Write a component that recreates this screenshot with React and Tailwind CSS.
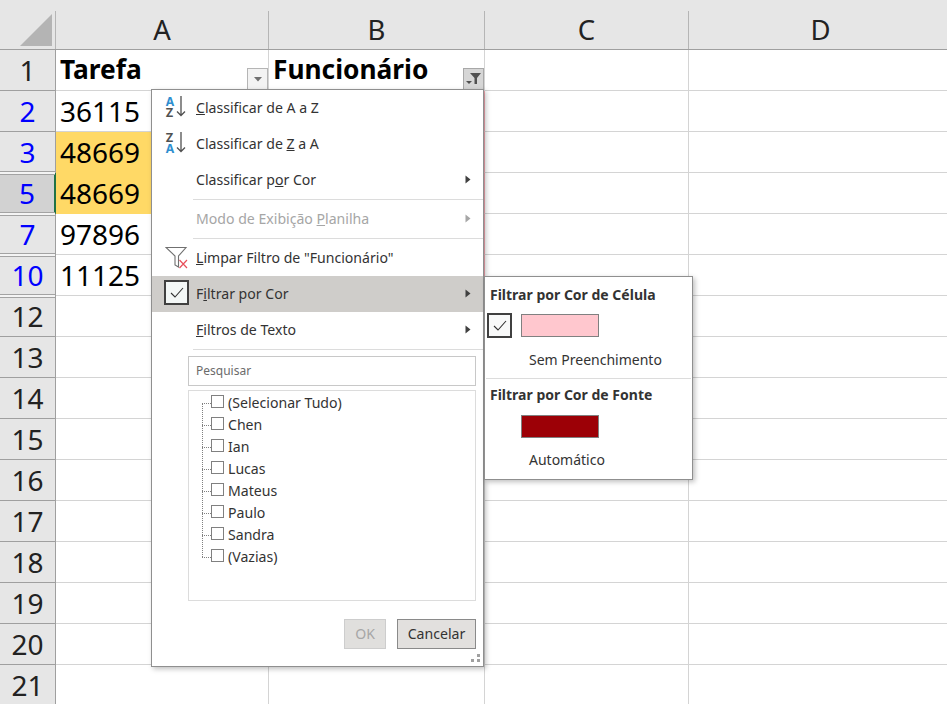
const rows = [
  { n: "1", a: "Tarefa", b: "Funcionário", head: true },
  { n: "2", a: "36115", blue: true, pink: true },
  { n: "3", a: "48669", blue: true, yellow: true, pink: true, gap: true },
  { n: "5", a: "48669", blue: true, yellow: true, pink: true, selected: true, gap: true },
  { n: "7", a: "97896", blue: true, pink: true, gap: true },
  { n: "10", a: "11125", blue: true, pink: true, gap: true },
  { n: "12" }, { n: "13" }, { n: "14" }, { n: "15" }, { n: "16" }, { n: "17" }, { n: "18" }, { n: "19" }, { n: "20" }, { n: "21" },
];
const names = ["(Selecionar Tudo)", "Chen", "Ian", "Lucas", "Mateus", "Paulo", "Sandra", "(Vazias)"];

function Arrow({ disabled }) {
  return (
    <svg width="6" height="9" viewBox="0 0 6 9" className="absolute left-[313px] top-1/2 -mt-[5px]">
      <path d="M0.5 0.5 L5.5 4.5 L0.5 8.5 Z" fill={disabled ? "#a6a6a6" : "#404040"} />
    </svg>
  );
}

function SortIcon({ first, second, firstBlue }) {
  return (
    <div className="absolute left-[13px] top-[5px] w-[24px] h-[24px]">
      <svg width="24" height="24" viewBox="0 0 24 24">
        <text x="0.5" y="10.5" fontFamily="Inter, sans-serif" fontWeight="700" fontSize="12" fill={firstBlue ? "#2f8fd0" : "#505050"}>{first}</text>
        <text x="0.5" y="21.5" fontFamily="Inter, sans-serif" fontWeight="700" fontSize="12" fill={firstBlue ? "#505050" : "#2f8fd0"}>{second}</text>
        <path d="M16 1 V20.5 M12 16.5 L16 20.5 L20 16.5" stroke="#505050" strokeWidth="1.3" fill="none" />
      </svg>
    </div>
  );
}

function Item({ children, icon, arrow, disabled, active }) {
  return (
    <div className={`relative h-[36px] flex items-center pl-[44px] shrink-0 ${active ? "bg-[#cfcdca]" : ""} ${disabled ? "text-[#a6a6a6]" : "text-[#333333]"}`}>
      {icon}
      <span>{children}</span>
      {arrow && <Arrow disabled={disabled} />}
    </div>
  );
}

const Sep = () => <div className="ml-[41px] h-px bg-[#dcdcdc] shrink-0" />;

function Check() {
  return (
    <svg width="14" height="11" viewBox="0 0 14 11"><path d="M1 6 L5 10 L13 1" stroke="#303030" strokeWidth="1.1" fill="none" /></svg>
  );
}

export default function App() {
  return (
    <div className="relative w-[947px] h-[704px] overflow-hidden bg-white text-black" style={{ fontFamily: '"Noto Sans", sans-serif' }}>
      <div className="h-[11px] bg-[#e6e6e6]" />
      <div className="flex h-[39px] bg-[#e6e6e6] border-b border-[#9f9f9f] text-[27.5px] text-[#222222]">
        <div className="relative w-[56px] border-r border-[#b5b5b5]">
          <svg width="56" height="38" viewBox="0 0 56 38" className="absolute top-0 left-0">
            <path d="M20 35 L52 35 L52 3 Z" fill="#b4b4b4" />
          </svg>
        </div>
        <div className="w-[213px] flex items-center justify-center border-r border-[#b5b5b5]">A</div>
        <div className="w-[216px] flex items-center justify-center border-r border-[#b5b5b5]">B</div>
        <div className="w-[204px] flex items-center justify-center border-r border-[#b5b5b5]">C</div>
        <div className="flex-1 flex items-center justify-center pl-[5px]">D</div>
      </div>
      {rows.map((r) => (
        <div key={r.n} className="flex h-[41px]">
          <div className={`relative w-[56px] shrink-0 flex items-center justify-center border-r border-b text-[28px] ${r.selected ? "bg-[#d2d2d2] border-r-[#217346] border-r-2" : "bg-[#e6e6e6] border-r-[#9f9f9f]"} border-b-[#9f9f9f] ${r.blue ? "text-[#0000ff]" : "text-[#222222]"}`}>
            {r.n}
            {r.gap && <div className="absolute z-10 left-0 w-[55px] -bottom-[3px] h-[4px] border-y border-[#a3a3a3] bg-[#f4f4f4]" />}
          </div>
          <div className={`relative w-[213px] shrink-0 flex items-center pl-[4px] border-r border-b ${r.yellow ? "bg-[#ffd966] border-[#ffd966]" : "border-[#d4d4d4]"} ${r.head ? "font-bold text-[26.3px]" : "text-[28px]"}`}>
            {r.a}
            {r.head && (
              <div className="absolute right-0 bottom-0 w-[21px] h-[22px] bg-[#f3f3f3] border border-[#b5b5b5] flex items-center justify-center">
                <svg width="8" height="5" viewBox="0 0 8 5"><path d="M0 0 H8 L4 4.5 Z" fill="#707070" /></svg>
              </div>
            )}
          </div>
          <div className={`relative w-[216px] shrink-0 flex items-center pl-[4px] border-r border-b font-bold text-[26.3px] border-b-[#d4d4d4] ${r.pink ? "border-r-[#f4a9b2]" : "border-r-[#d4d4d4]"}`}>
            {r.b}
            {r.head && (
              <div className="absolute right-0 bottom-0 w-[21px] h-[22px] bg-[#d6d6d6] border border-[#a8a8a8] flex items-center justify-center">
                <svg width="17" height="14" viewBox="0 0 17 14">
                  <path d="M5 1 H16 L12 6 V12 H9.5 V6 Z" fill="#505050" />
                  <path d="M1 9 H7 L4 12 Z" fill="#505050" />
                </svg>
              </div>
            )}
          </div>
          <div className="w-[204px] shrink-0 border-r border-b border-[#d4d4d4]" />
          <div className="flex-1 border-b border-[#d4d4d4]" />
        </div>
      ))}

      {/* Filter dropdown */}
      <div className="absolute z-20 left-[151px] top-[89px] w-[333px] h-[578px] bg-white border border-[#8f8f8f] shadow-[2px_2px_5px_rgba(0,0,0,0.25)] text-[14.1px] flex flex-col">
        <Item icon={<SortIcon first="A" second="Z" firstBlue />}><u>C</u>lassificar de A a Z</Item>
        <Item icon={<SortIcon first="Z" second="A" />}>Classificar de <u>Z</u> a A</Item>
        <Item arrow>Classificar p<u>o</u>r Cor</Item>
        <div className="h-px shrink-0" />
        <Sep />
        <div className="h-px shrink-0" />
        <Item arrow disabled>Modo de Exibição <u>P</u>lanilha</Item>
        <div className="h-px shrink-0" />
        <Sep />
        <div className="h-px shrink-0" />
        <Item icon={
          <svg width="24" height="24" viewBox="0 0 24 24" className="absolute left-[13px] top-[6px]">
            <path d="M1 1.5 H21 L13.5 10 V21 L10 19 V10 Z" fill="none" stroke="#707070" strokeWidth="1.1" />
            <path d="M14.5 14 L22 22 M22 14 L14.5 22" stroke="#e8505b" strokeWidth="1.2" />
          </svg>
        }><u>L</u>impar Filtro de "Funcionário"</Item>
        <Item active arrow icon={
          <div className="absolute left-[12px] top-[4px] w-[25px] h-[25px] bg-[#f3f7f6] border-2 border-[#404040] flex items-center justify-center"><Check /></div>
        }>F<u>i</u>ltrar por Cor</Item>
        <Item arrow><u>F</u>iltros de Texto</Item>
        <div className="h-px shrink-0" />
        <Sep />
        <div className="mt-[6px] ml-[36px] w-[288px] h-[30px] shrink-0 border border-[#c8c8c8] flex items-center pl-[7px] text-[12px] text-[#6b6b6b]">Pesquisar</div>
        <div className="mt-[4px] ml-[36px] w-[288px] h-[211px] shrink-0 border border-[#dcdcdc] pt-[1px] relative">
          <div className="absolute left-[13px] top-[12px] h-[154px] border-l border-dotted border-[#808080]" />
          {names.map((n) => (
            <div key={n} className="h-[22px] flex items-center text-[#333333] relative">
              <div className="ml-[13px] w-[9px] border-t border-dotted border-[#808080]" />
              <div className="w-[13px] h-[13px] border border-[#808080] bg-white -mt-[3px]" />
              <span className="ml-[4px]">{n}</span>
            </div>
          ))}
        </div>
        <div className="flex justify-end mt-[18px] mr-[7px] gap-[11px]">
          <div className="w-[42px] h-[30px] bg-[#e0dfdd] border border-[#cdcdcd] flex items-center justify-center text-[#a6a6a6]">OK</div>
          <div className="w-[79px] h-[30px] bg-[#e2e0de] border border-[#8a8a8a] flex items-center justify-center text-[#333333]">Cancelar</div>
        </div>
        <div className="absolute right-[2px] bottom-[2px]">
          <svg width="10" height="10" viewBox="0 0 10 10" fill="#a0a0a0">
            <rect x="6" y="0" width="3" height="3" /><rect x="0" y="5" width="3" height="3" /><rect x="6" y="5" width="3" height="3" />
          </svg>
        </div>
      </div>

      {/* Colour submenu */}
      <div className="absolute z-20 left-[484px] top-[276px] w-[209px] h-[204px] bg-white border border-[#8f8f8f] shadow-[2px_2px_5px_rgba(0,0,0,0.25)] text-[14px] text-[#333333] flex flex-col">
        <div className="h-[35px] flex items-center pl-[5px] font-bold shrink-0">Filtrar por Cor de Célula</div>
        <div className="h-[27px] flex items-center pl-[2px] shrink-0">
          <div className="w-[25px] h-[25px] bg-[#f8f9f9] border-2 border-[#404040] flex items-center justify-center"><Check /></div>
          <div className="ml-[9px] -mt-[1px] w-[78px] h-[23px] bg-[#ffc7ce] border border-[#808080]" />
        </div>
        <div className="h-[39px] flex items-center pl-[44px] shrink-0 pt-[2px]">Sem Preenchimento</div>
        <div className="h-px bg-[#dcdcdc] mx-px shrink-0" />
        <div className="h-[34px] flex items-center pl-[5px] font-bold shrink-0 pb-[4px]">Filtrar por Cor de Fonte</div>
        <div className="h-[26px] flex items-center pl-[36px] shrink-0">
          <div className="w-[78px] h-[23px] bg-[#9c0006] border border-[#808080]" />
        </div>
        <div className="h-[40px] flex items-center pl-[44px] shrink-0 pt-[1px]">Automático</div>
      </div>
    </div>
  );
}
